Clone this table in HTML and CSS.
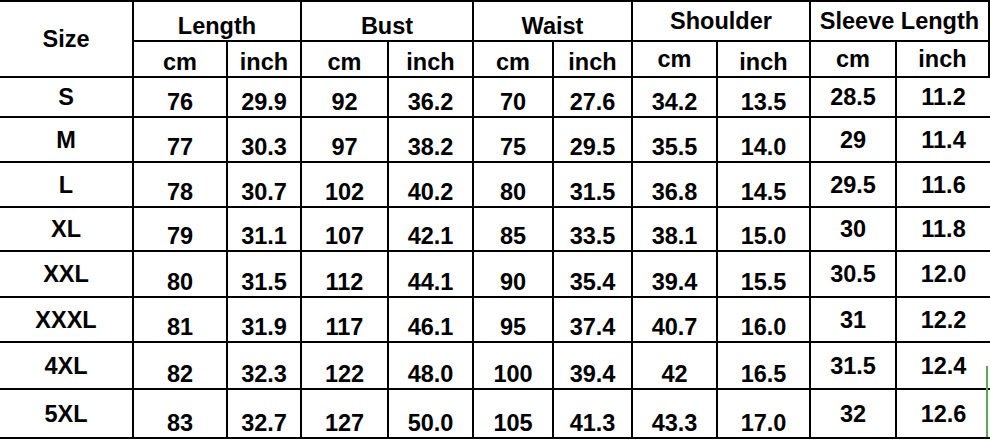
FILE: index.html
```html
<!DOCTYPE html>
<html>
<head>
<meta charset="utf-8">
<link rel="stylesheet" href="styles.css">
</head>
<body>
<div class="chart">
  <div class="cell size-head">Size</div>
  <div class="cell group low span2">Length</div>
  <div class="cell group low span2">Bust</div>
  <div class="cell group low span2">Waist</div>
  <div class="cell group span2">Shoulder</div>
  <div class="cell group span2 edge">Sleeve Length</div>

  <div class="cell low">cm</div><div class="cell low">inch</div>
  <div class="cell low">cm</div><div class="cell low">inch</div>
  <div class="cell low">cm</div><div class="cell low">inch</div>
  <div class="cell sub-mid">cm</div><div class="cell low">inch</div>
  <div class="cell sub-mid">cm</div><div class="cell sub-mid edge">inch</div>

  <div class="cell mid">S</div><div class="cell low">76</div><div class="cell low">29.9</div><div class="cell low">92</div><div class="cell low">36.2</div><div class="cell low">70</div><div class="cell low">27.6</div><div class="cell low">34.2</div><div class="cell low">13.5</div><div class="cell mid">28.5</div><div class="cell mid">11.2</div>
  <div class="cell mid">M</div><div class="cell low">77</div><div class="cell low">30.3</div><div class="cell low">97</div><div class="cell low">38.2</div><div class="cell low">75</div><div class="cell low">29.5</div><div class="cell low">35.5</div><div class="cell low">14.0</div><div class="cell mid">29</div><div class="cell mid">11.4</div>
  <div class="cell mid">L</div><div class="cell low">78</div><div class="cell low">30.7</div><div class="cell low">102</div><div class="cell low">40.2</div><div class="cell low">80</div><div class="cell low">31.5</div><div class="cell low">36.8</div><div class="cell low">14.5</div><div class="cell mid">29.5</div><div class="cell mid">11.6</div>
  <div class="cell mid">XL</div><div class="cell low">79</div><div class="cell low">31.1</div><div class="cell low">107</div><div class="cell low">42.1</div><div class="cell low">85</div><div class="cell low">33.5</div><div class="cell low">38.1</div><div class="cell low">15.0</div><div class="cell mid">30</div><div class="cell mid">11.8</div>
  <div class="cell mid">XXL</div><div class="cell low">80</div><div class="cell low">31.5</div><div class="cell low">112</div><div class="cell low">44.1</div><div class="cell low">90</div><div class="cell low">35.4</div><div class="cell low">39.4</div><div class="cell low">15.5</div><div class="cell mid">30.5</div><div class="cell mid">12.0</div>
  <div class="cell mid">XXXL</div><div class="cell low">81</div><div class="cell low">31.9</div><div class="cell low">117</div><div class="cell low">46.1</div><div class="cell low">95</div><div class="cell low">37.4</div><div class="cell low">40.7</div><div class="cell low">16.0</div><div class="cell mid">31</div><div class="cell mid">12.2</div>
  <div class="cell mid">4XL</div><div class="cell low">82</div><div class="cell low">32.3</div><div class="cell low">122</div><div class="cell low">48.0</div><div class="cell low">100</div><div class="cell low">39.4</div><div class="cell low">42</div><div class="cell low">16.5</div><div class="cell mid">31.5</div><div class="cell mid">12.4</div>
  <div class="cell mid">5XL</div><div class="cell low">83</div><div class="cell low">32.7</div><div class="cell low">127</div><div class="cell low">50.0</div><div class="cell low">105</div><div class="cell low">41.3</div><div class="cell low">43.3</div><div class="cell low">17.0</div><div class="cell mid">32</div><div class="cell mid">12.6</div>
</div>
</body>
</html>
```
FILE: styles.css
```css
html, body {
  margin: 0;
  padding: 0;
  background: #fff;
}

.chart {
  position: relative;
  display: grid;
  grid-template-columns: 132px 92px 72px 85px 83px 78px 77px 83px 91px 84px 93px;
  grid-template-rows: 38px 34px 38px 43px 43px 42px 44px 43px 45px 47px;
  gap: 2px;
  padding: 2px 0;
  background: #000;
  width: 990px;
  font-family: "Liberation Sans", Arial, sans-serif;
  font-weight: bold;
  font-size: 23.5px;
  line-height: 26px;
  color: #000;
}

.chart::after {
  content: "";
  position: absolute;
  right: 2px;
  top: 366px;
  width: 2px;
  height: 71px;
  background: #5aaa55;
}

.cell {
  background: #fff;
  display: flex;
  justify-content: center;
  white-space: nowrap;
}

.size-head {
  grid-row: span 2;
  align-items: center;
}

.span2 {
  grid-column: span 2;
}

.group {
  align-items: center;
}

.low {
  align-items: flex-end;
  padding-bottom: 1px;
}

.mid {
  align-items: center;
}

.sub-mid {
  align-items: center;
}

.edge {
  border-right: 2px solid #000;
}
```
